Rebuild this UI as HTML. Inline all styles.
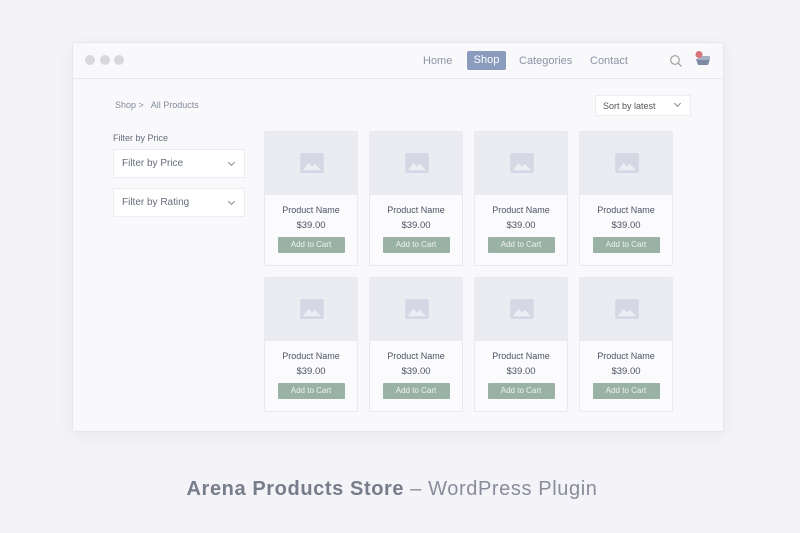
<!DOCTYPE html>
<html><head><meta charset="utf-8"><style>
*{margin:0;padding:0;box-sizing:border-box}
body{width:800px;height:533px;background:#f4f3f8;font-family:"Liberation Sans",sans-serif;position:relative;overflow:hidden;color:#5c6270}
.win{position:absolute;left:72px;top:42px;width:652px;height:390px;background:#f9f9fb;border:1px solid #e6e6ec;border-radius:3px;box-shadow:0 4px 18px rgba(0,0,0,.05)}
.hdr{position:absolute;left:0;top:0;right:0;height:36px;border-bottom:1px solid #e8e8ee}
.dot{position:absolute;top:12px;width:10px;height:10px;border-radius:50%;background:#d8d8de}
.nav{position:absolute;top:18px;font-size:11px;color:#8c93a5;transform:translateY(-50%)}
.shop{position:absolute;left:394px;top:8px;width:39px;height:19px;background:#8a9bbd;color:#fff;font-size:11px;text-align:center;line-height:19px;border-radius:2px}
.crumb{position:absolute;left:42px;top:57px;font-size:9px;color:#838a9a}
.sort{position:absolute;left:522px;top:52px;width:96px;height:21px;background:#fff;border:1px solid #ececf1;font-size:9px;color:#555;padding:5px 7px}
.sort span,.sel span{position:absolute;right:10px;top:5px;width:5px;height:5px;border-right:1px solid #888;border-bottom:1px solid #888;transform:rotate(45deg)}
.lbl{position:absolute;left:40px;top:90px;font-size:9px;color:#666c7a}
.sel{position:absolute;left:40px;width:132px;height:29px;background:#fff;border:1px solid #ececf1;font-size:10px;color:#666c7a;padding:8px 8px}
.sel span{top:10px}
.card{position:absolute;width:94px;height:135px;background:#fbfbfd;border:1px solid #e9e9ee;border-radius:2px;overflow:hidden}
.img{height:63px;background:#ebecf2;position:relative}
.img svg{position:absolute;left:35px;top:21px}
.pn{text-align:center;font-size:9px;color:#4d5362;margin-top:10px}
.pr{text-align:center;font-size:9.5px;color:#4d5362;margin-top:5px}
.btn{margin:6px auto 0;width:67px;height:16px;background:#9ab2a6;color:#eef3f0;font-size:8px;text-align:center;line-height:16px;border-radius:1px}
.title{position:absolute;left:-8px;width:800px;top:478px;text-align:center;font-size:20px;color:#888d99;letter-spacing:0.6px}
.title b{color:#777d8a}
</style></head><body>
<div class="win">
 <div class="hdr">
  <div class="dot" style="left:12px"></div><div class="dot" style="left:27px"></div><div class="dot" style="left:41px"></div>
  <div class="nav" style="left:350px">Home</div>
  <div class="shop">Shop</div>
  <div class="nav" style="left:446px">Categories</div>
  <div class="nav" style="left:517px">Contact</div>
  <svg style="position:absolute;left:596px;top:11px" width="14" height="14" viewBox="0 0 14 14"><circle cx="6" cy="6" r="4.3" fill="none" stroke="#999" stroke-width="1.1"/><path d="M9.2 9.2L12.5 12.5" stroke="#999" stroke-width="1.2"/></svg>
  <svg style="position:absolute;left:620px;top:7px" width="22" height="18" viewBox="0 0 22 18"><path d="M3 9h14l-2 6H5z" fill="#7d8aa3"/><rect x="5" y="6" width="12" height="4" rx="1" fill="#a7b0c2"/><circle cx="6" cy="4.5" r="3.5" fill="#d9747c"/></svg>
 </div>
 <div class="crumb">Shop &gt;&nbsp;&nbsp; All Products</div>
 <div class="sort">Sort by latest<span></span></div>
 <div class="lbl">Filter by Price</div>
 <div class="sel" style="top:106px">Filter by Price<span></span></div>
 <div class="sel" style="top:145px">Filter by Rating<span></span></div>
</div>
<div id="cards"></div>
<div class="title"><b>Arena Products Store</b> – WordPress Plugin</div>
<script>
var h='',xs=[264,369,474,579],ys=[131,277];
ys.forEach(function(y){xs.forEach(function(x){h+='<div class="card" style="left:'+x+'px;top:'+y+'px"><div class="img"><svg width="24" height="20" viewBox="0 0 26 22"><rect width="26" height="22" rx="2" fill="#d5d8e4"/><path d="M3 19l6-8 4 4 3-3 7 7z" fill="#eceef4"/></svg></div><div class="pn">Product Name</div><div class="pr">$39.00</div><div class="btn">Add to Cart</div></div>'})});
document.getElementById('cards').innerHTML=h;
</script>
</body></html>
